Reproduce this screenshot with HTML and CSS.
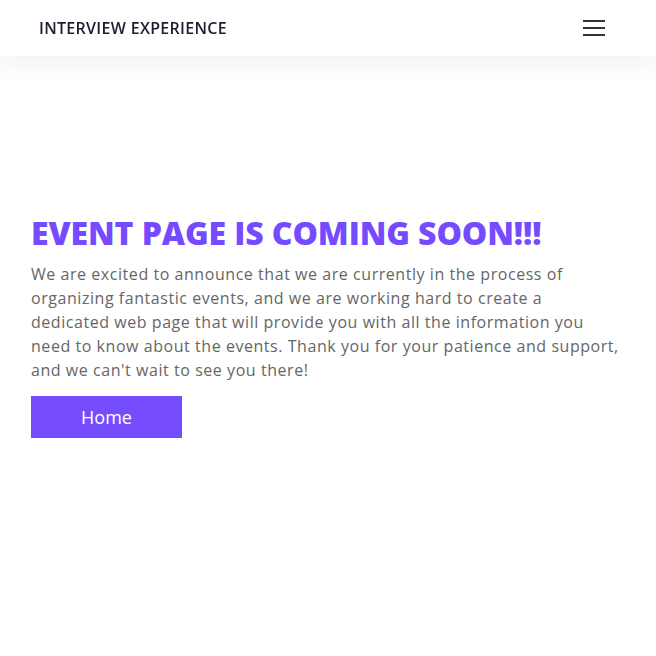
FILE: index.html
```html
<!DOCTYPE html>
<html lang="en">
<head>
<meta charset="utf-8">
<title>Event Page</title>
<link rel="stylesheet" href="styles.css">
</head>
<body>
<header class="navbar">
  <a class="brand" href="#">INTERVIEW EXPERIENCE</a>
  <button class="toggler" aria-label="Menu">
    <svg width="22" height="16" viewBox="0 0 22 16"><path d="M0 1h22M0 8h22M0 15h22" stroke="#333" stroke-width="2"/></svg>
  </button>
</header>
<main class="hero">
  <div class="content">
    <h1 class="title">EVENT PAGE IS COMING SOON!!!</h1>
    <p class="text">We are excited to announce that we are currently in the process of organizing fantastic events, and we are working hard to create a dedicated web page that will provide you with all the information you need to know about the events. Thank you for your patience and support, and we can't wait to see you there!</p>
    <a class="btn" href="#">Home</a>
  </div>
</main>
</body>
</html>
```
FILE: styles.css
```css
* { box-sizing: border-box; }
html, body { margin: 0; padding: 0; }
body {
  font-family: "Open Sans", "Liberation Sans", sans-serif;
  background: #fff;
}
.navbar {
  position: fixed;
  top: 0; left: 0; right: 0;
  height: 56px;
  background: #fff;
  display: flex;
  align-items: center;
  justify-content: space-between;
  padding: 0 51px 0 39px;
  box-shadow: 0 8px 24px rgba(30, 40, 90, 0.06);
  z-index: 10;
}
.brand {
  color: #1b1e2c;
  text-decoration: none;
  font-size: 16px;
  font-weight: 600;
  letter-spacing: 0.3px;
}
.toggler {
  background: none;
  border: 0;
  padding: 0;
  display: flex;
}
.hero {
  min-height: 656px;
  display: flex;
  align-items: center;
  padding: 0 31px;
}
.content { width: 100%; padding-bottom: 4px; }
.title {
  margin: 0 0 10px;
  color: #764bff;
  font-size: 32px;
  font-weight: 800;
  line-height: 38px;
  letter-spacing: -0.1px;
}
.text {
  margin: 0 0 14px;
  color: #666;
  font-size: 16px;
  line-height: 24px;
  letter-spacing: 0.55px;
}
.btn {
  display: inline-flex;
  align-items: center;
  justify-content: center;
  width: 151px;
  height: 42px;
  background: #764dfd;
  color: #fff;
  text-decoration: none;
  font-size: 18px;
}
```
